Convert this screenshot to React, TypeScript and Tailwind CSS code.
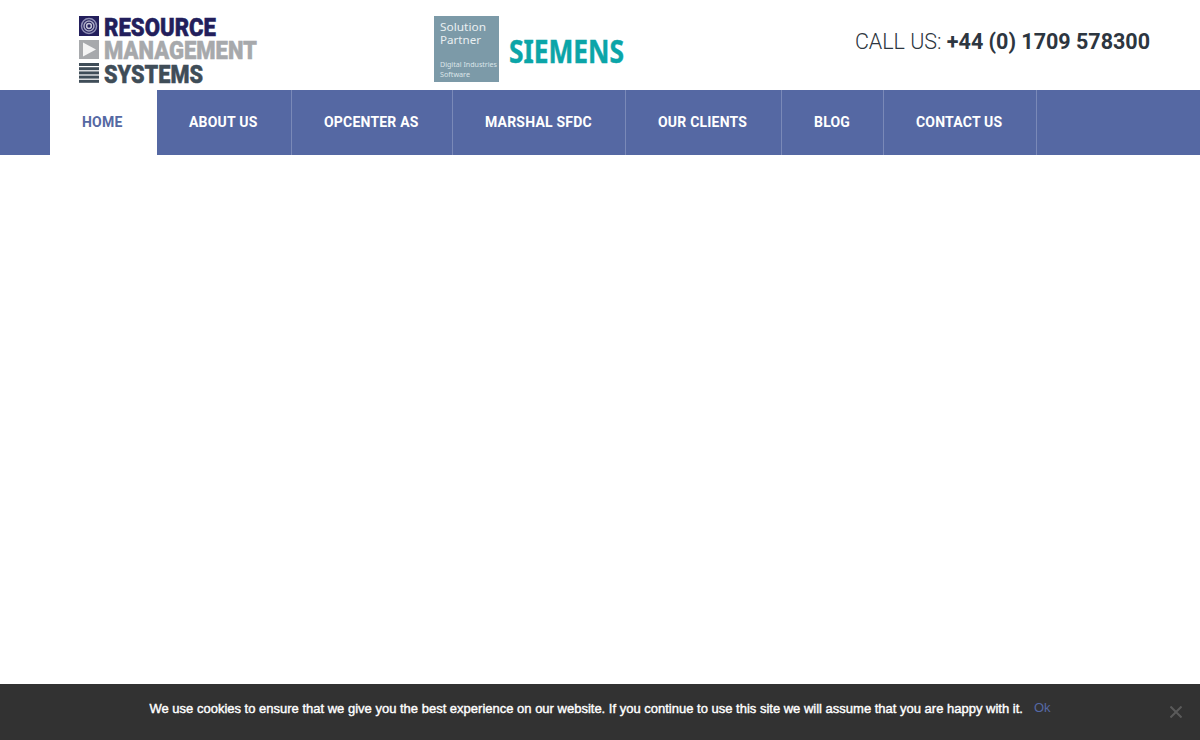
import React from "react";

const nav = [
  { label: "HOME", w: "w-[107px]", active: true },
  { label: "ABOUT US", w: "w-[135px]" },
  { label: "OPCENTER AS", w: "w-[161px]" },
  { label: "MARSHAL SFDC", w: "w-[173px]" },
  { label: "OUR CLIENTS", w: "w-[156px]" },
  { label: "BLOG", w: "w-[102px]" },
  { label: "CONTACT US", w: "w-[153px]" },
];

function RmsLogo() {
  const font = "Roboto, 'Liberation Sans', sans-serif";
  return (
    <svg width="180" height="72" viewBox="0 0 180 72" className="block">
      <rect x="0" y="1" width="20" height="20" fill="#231f5c" />
      <circle cx="10" cy="11" r="7.5" fill="none" stroke="#8f8fb5" strokeWidth="1.5" />
      <circle cx="10" cy="11" r="5" fill="#231f5c" stroke="#a9a9c4" strokeWidth="1.5" />
      <circle cx="10" cy="11" r="2.4" fill="none" stroke="#c4c4d6" strokeWidth="1.5" />
      <rect x="0" y="25" width="20" height="19" fill="#a7a9ac" />
      <path d="M4 27.5 L17 34.5 L4 41.5 Z" fill="#f4f4f4" />
      <g fill="#3f4d58">
        <rect x="0" y="48" width="20" height="3" />
        <rect x="0" y="52.2" width="20" height="3" />
        <rect x="0" y="56.4" width="20" height="3" />
        <rect x="0" y="60.6" width="20" height="3" />
        <rect x="0" y="64.8" width="20" height="3" />
      </g>
      <g fontFamily={font} fontWeight="900" fontSize="26.5" strokeWidth="0.5">
        <text x="25" y="21" fill="#231f5c" stroke="#231f5c" textLength="112" lengthAdjust="spacingAndGlyphs">RESOURCE</text>
        <text x="25" y="44" fill="#a7a9ac" stroke="#a7a9ac" textLength="153" lengthAdjust="spacingAndGlyphs">MANAGEMENT</text>
        <text x="25" y="68" fill="#3f4d58" stroke="#3f4d58" textLength="99" lengthAdjust="spacingAndGlyphs">SYSTEMS</text>
      </g>
    </svg>
  );
}

function SiemensLogo() {
  const font = "'Noto Sans', 'Open Sans', sans-serif";
  return (
    <svg width="190" height="66" viewBox="0 0 190 66" className="block">
      <rect x="0" y="0" width="65" height="66" fill="#7c9aa8" />
      <text x="6" y="15" fontFamily={font} fontSize="10.5" fill="#e9eff1" textLength="46" lengthAdjust="spacingAndGlyphs">Solution</text>
      <text x="6" y="28" fontFamily={font} fontSize="10.5" fill="#e9eff1" textLength="41" lengthAdjust="spacingAndGlyphs">Partner</text>
      <text x="6" y="51" fontFamily={font} fontSize="7.2" fill="#dbe5e9" textLength="57" lengthAdjust="spacingAndGlyphs">Digital Industries</text>
      <text x="6" y="61" fontFamily={font} fontSize="7.2" fill="#dbe5e9" textLength="30" lengthAdjust="spacingAndGlyphs">Software</text>
      <text x="75" y="46.5" fontFamily={font} fontWeight="700" fontSize="33" fill="#0ba5a8" stroke="#0ba5a8" strokeWidth="0.5" textLength="115" lengthAdjust="spacingAndGlyphs">SIEMENS</text>
    </svg>
  );
}

export default function App() {
  return (
    <div className="relative h-[740px] w-[1200px] overflow-hidden bg-white font-['Roboto',sans-serif]">
      <header className="flex h-[90px] items-start">
        <div className="ml-[79px] mt-[15px]">
          <RmsLogo />
        </div>
        <div className="ml-[175px] mt-[16px]">
          <SiemensLogo />
        </div>
        <div className="ml-auto mr-[50px] mt-[29px] text-[21.5px] leading-[26px] text-[#2d3640]">
          <span className="font-light">CALL US: </span>
          <span className="font-bold">+44 (0) 1709 578300</span>
        </div>
      </header>
      <nav className="flex h-[65px] bg-[#5568a3] pl-[50px]">
        {nav.map((item) => (
          <a
            key={item.label}
            className={`flex items-center pl-[32px] text-[14px] font-bold tracking-[0.2px] ${item.w} ${
              item.active ? "bg-white text-[#5568a3]" : "border-r border-[#7a89b8] text-white"
            }`}
          >
            {item.label}
          </a>
        ))}
      </nav>
      <div className="absolute bottom-0 left-0 flex h-[56px] w-full justify-center bg-[#323232] pt-[15px] font-['Liberation_Sans',sans-serif] text-[13px] leading-[20px]">
        <span className="text-white [-webkit-text-stroke:0.4px_white]">
          We use cookies to ensure that we give you the best experience on our website. If you continue to use this site we will assume that you are happy with it.
        </span>
        <a className="ml-[11px] mt-[-1px] text-[13px] text-[#5568a3]">Ok</a>
        <svg width="12" height="12" viewBox="0 0 12 12" className="absolute right-[18px] top-[22px]">
          <path d="M0.5 0.5 L11.5 11.5 M11.5 0.5 L0.5 11.5" stroke="#5a5a5a" strokeWidth="2" fill="none" />
        </svg>
      </div>
    </div>
  );
}
